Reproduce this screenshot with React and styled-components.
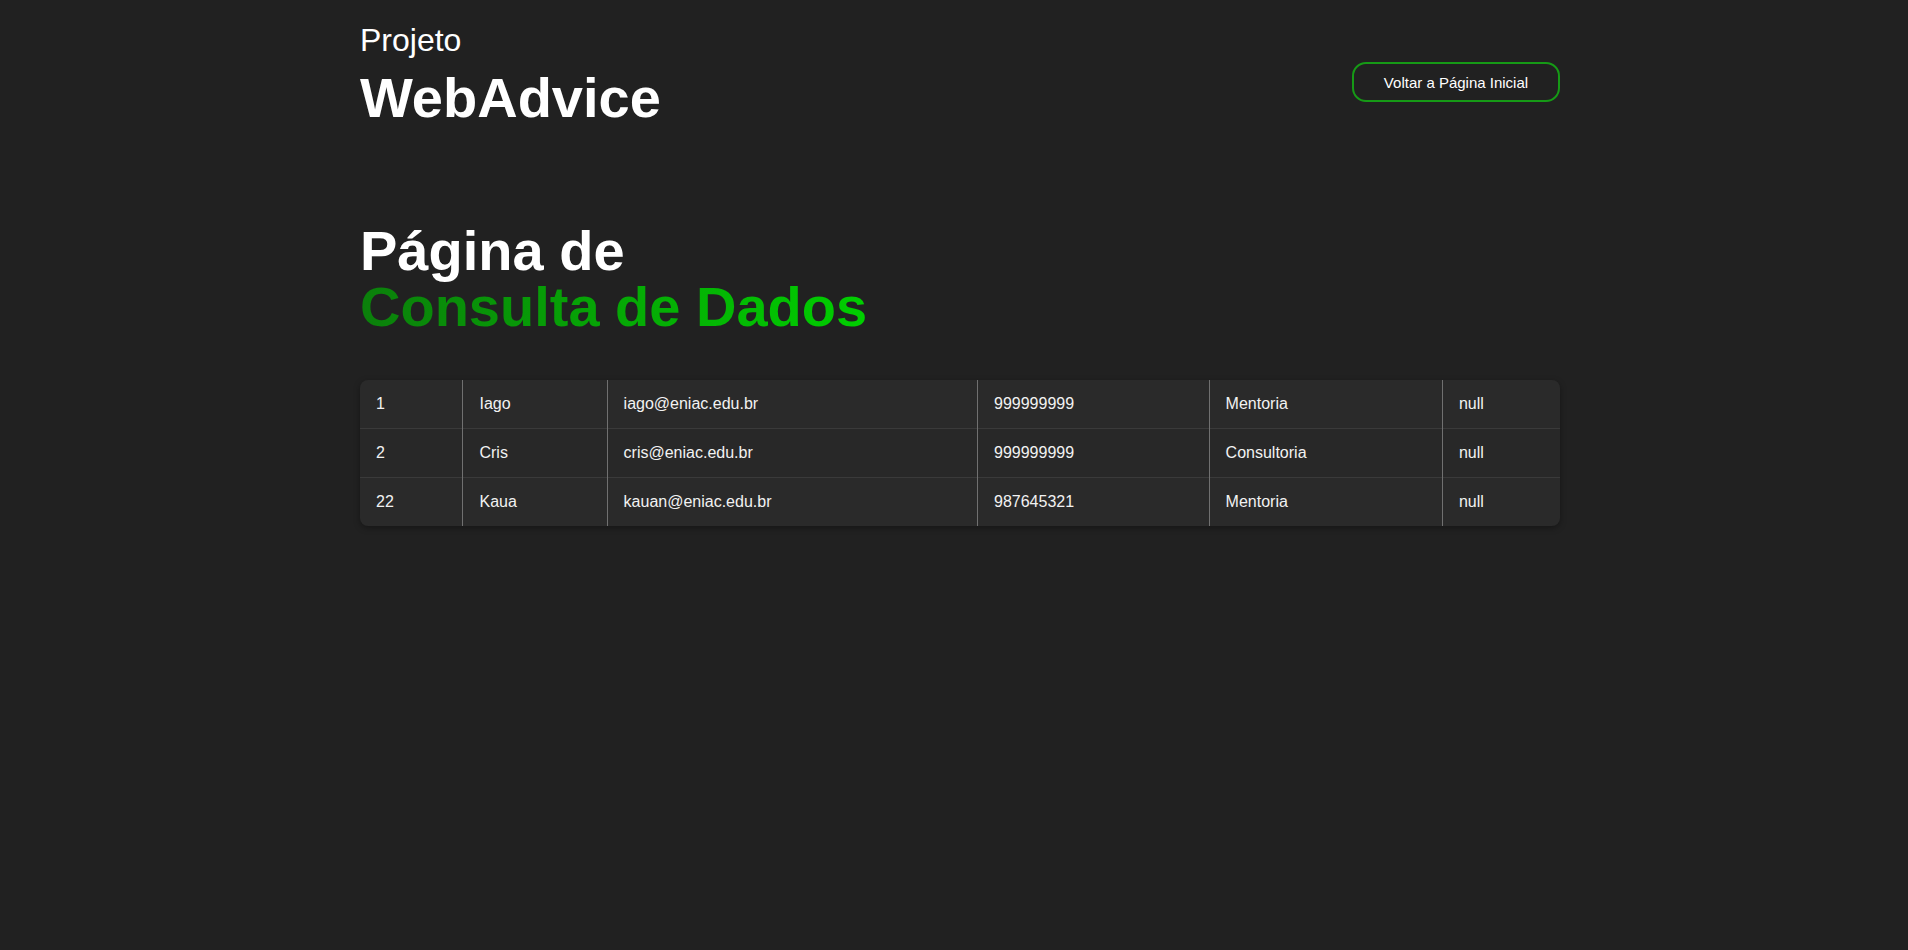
import styled, { createGlobalStyle } from "styled-components"

const GlobalStyle = createGlobalStyle`
    body {
        margin: 0;
        background: #212121;
        font-family: "Liberation Sans", Arial, sans-serif;
        color: #FFFFFF;
    }
`

const rows = [
    { id: 1, nome: "Iago", email: "iago@eniac.edu.br", telefone: "999999999", servico: "Mentoria", obs: "null" },
    { id: 2, nome: "Cris", email: "cris@eniac.edu.br", telefone: "999999999", servico: "Consultoria", obs: "null" },
    { id: 22, nome: "Kaua", email: "kauan@eniac.edu.br", telefone: "987645321", servico: "Mentoria", obs: "null" },
]

export default function App(){
    return(
        <>
            <GlobalStyle />
            <Page>
                <Container>
                    <Header>
                        <Brand>
                            <Small>Projeto</Small>
                            <Big>WebAdvice</Big>
                        </Brand>
                        <BackButton>Voltar a Página Inicial</BackButton>
                    </Header>
                    <Title>
                        Página de
                        <br />
                        <Highlight>Consulta de Dados</Highlight>
                    </Title>
                    <TableWrap>
                        <Table>
                            <tbody>
                                {rows.map(row =>
                                    <tr key={row.id}>
                                        <td>{row.id}</td>
                                        <td>{row.nome}</td>
                                        <td>{row.email}</td>
                                        <td>{row.telefone}</td>
                                        <td>{row.servico}</td>
                                        <td>{row.obs}</td>
                                    </tr>
                                )}
                            </tbody>
                        </Table>
                    </TableWrap>
                </Container>
            </Page>
        </>
    )
}

const Page = styled.div`
    min-height: 950px;
    padding: 22px 0 0 12px;
    box-sizing: border-box;
`
const Container = styled.div`
    width: 1200px;
    margin: 0 auto;
`
const Header = styled.header`
    display: flex;
    justify-content: space-between;
    align-items: flex-start;
`
const Brand = styled.div`
    display: flex;
    flex-direction: column;
`
const Small = styled.span`
    font-size: 32px;
    line-height: 37px;
`
const Big = styled.span`
    font-size: 56px;
    font-weight: bold;
    line-height: 78px;
`
const BackButton = styled.button`
    margin-top: 40px;
    width: 208px;
    height: 40px;
    background: transparent;
    border: 2px solid #169a16;
    border-radius: 14px;
    color: #FFFFFF;
    font-family: "Liberation Sans", Arial, sans-serif;
    font-size: 15px;
    cursor: pointer;
`
const Title = styled.h2`
    margin: 86px 0 0;
    font-size: 56px;
    font-weight: bold;
    line-height: 56px;
`
const Highlight = styled.span`
    background: linear-gradient(to right, #0b7f0b, #00cf00);
    -webkit-background-clip: text;
    background-clip: text;
    color: transparent;
`
const TableWrap = styled.div`
    margin-top: 45px;
    border-radius: 8px;
    overflow: hidden;
    background: #2a2a2a;
    box-shadow: 0 2px 6px rgba(0, 0, 0, 0.35);
`
const Table = styled.table`
    width: 100%;
    border-collapse: collapse;
    tr + tr td{
        border-top: 1px solid #3a3a3a;
    }
    tr:nth-child(even){
        background: #282828;
    }
    td{
        padding: 15px 16px;
        font-size: 16px;
        color: #F2F2F2;
        text-align: left;
    }
    td + td{
        border-left: 1px solid #707070;
    }
`
